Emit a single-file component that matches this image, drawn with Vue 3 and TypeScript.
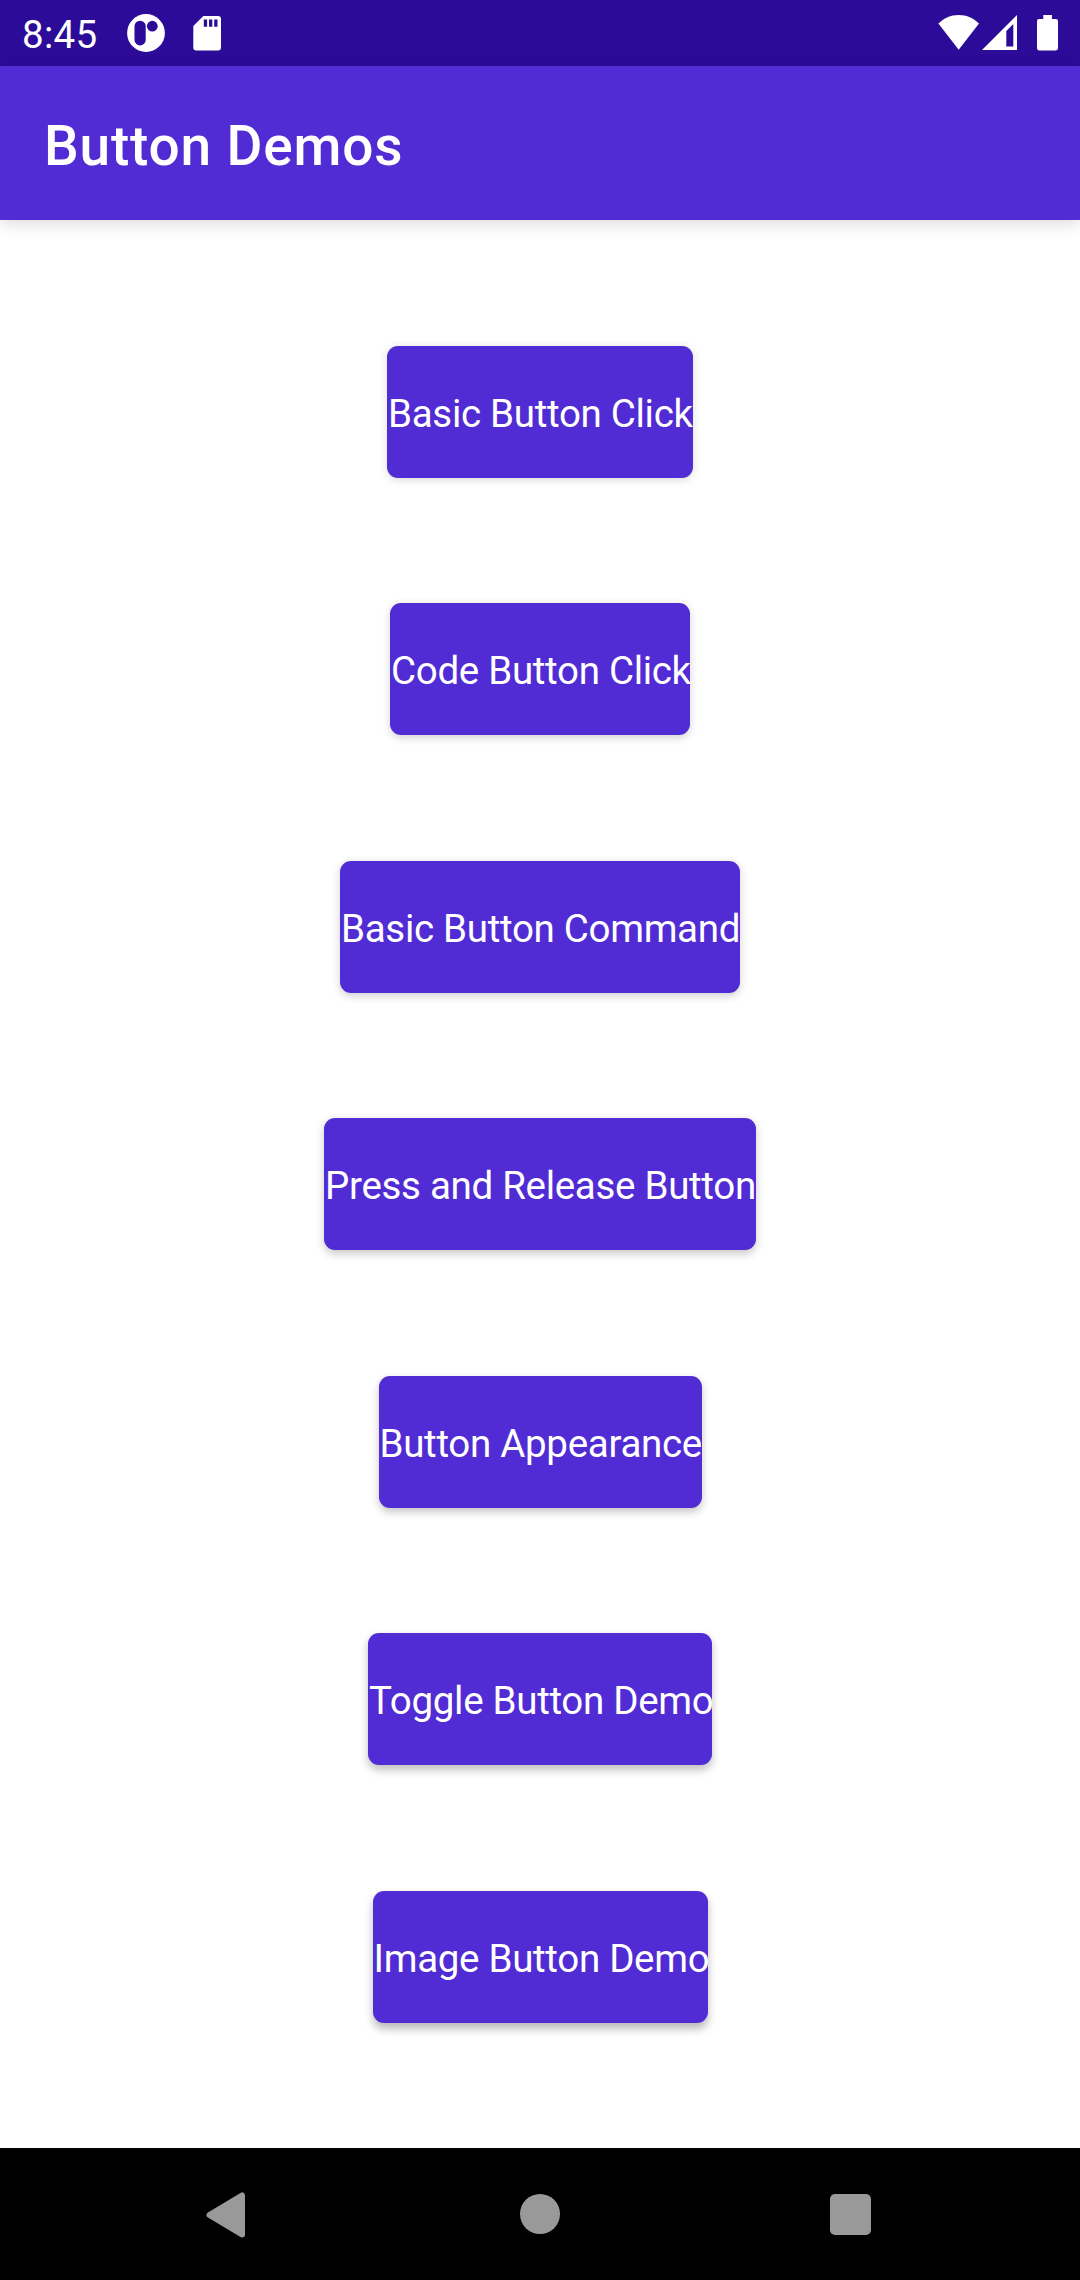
<script setup lang="ts">
interface DemoButton {
  label: string
  width: number
  depth: number
}

// depth drives the drop shadow, which lengthens further down the screen
const buttons: DemoButton[] = [
  { label: 'Basic Button Click', width: 306, depth: 1 },
  { label: 'Code Button Click', width: 300, depth: 2 },
  { label: 'Basic Button Command', width: 400, depth: 3 },
  { label: 'Press and Release Button', width: 432, depth: 4 },
  { label: 'Button Appearance', width: 323, depth: 5 },
  { label: 'Toggle Button Demo', width: 344, depth: 6 },
  { label: 'Image Button Demo', width: 335, depth: 7 },
]

function buttonStyle(b: DemoButton): Record<string, string> {
  const y = 1 + b.depth * 0.6
  const alpha = 0.13 + b.depth * 0.02
  return {
    width: `${b.width}px`,
    boxShadow: `0 ${y}px 8px rgba(0, 0, 0, ${alpha})`,
  }
}
</script>

<template>
  <div class="screen">
    <div class="status">
      <span class="time">8:45</span>
      <svg class="app-icon" width="40" height="40" viewBox="0 0 40 40">
        <circle cx="20" cy="20" r="18.9" fill="#fff" />
        <rect x="8.5" y="7.7" width="11.2" height="24.8" rx="5.6" fill="#2b0b98" />
        <circle cx="26.3" cy="13.2" r="5.4" fill="#2b0b98" />
      </svg>
      <svg class="sd-icon" width="28" height="36" viewBox="0 0 28 36">
        <path d="M10.3 1H25a3 3 0 0 1 3 3v28.4a3 3 0 0 1-3 3H3.300a3 3 0 0 1-3-3V11z" fill="#fff" />
        <path d="M10.800 4.600h3.300v7.200h-3.300zM16 4.600h3.300v7.200H16zM21.200 4.600h3.300v7.200h-3.300z" fill="#2b0b98" />
      </svg>
      <span class="spacer"></span>
      <svg class="wifi-icon" width="42" height="36" viewBox="0 0 42 36">
        <path d="M.4 9.600C5.700 4.200 12.500 1 20.700 1s15 3.200 20.300 8.600L20.700 35.700z" fill="#fff" />
      </svg>
      <svg class="signal-icon" width="35" height="36" viewBox="0 0 35 36">
        <path fill-rule="evenodd" d="M0 36 35 1v35zM24.300 17v15.500h7V10z" fill="#fff" />
      </svg>
      <svg class="battery-icon" width="21" height="37" viewBox="0 0 21 37">
        <path d="M6.300 1h8.600v4h4a2.100 2.100 0 0 1 2.100 2.100v27.200a2.100 2.100 0 0 1-2.100 2.100H2.100A2.100 2.100 0 0 1 0 34.300V7.100A2.100 2.100 0 0 1 2.100 5h4.200z" fill="#fff" />
      </svg>
    </div>
    <header class="toolbar">
      <h1 class="title">Button Demos</h1>
    </header>
    <main class="content">
      <button v-for="b in buttons" :key="b.label" class="demo" :style="buttonStyle(b)">
        {{ b.label }}
      </button>
    </main>
    <nav class="navbar">
      <svg class="back" width="40" height="46" viewBox="0 0 40 46">
        <path d="M36 3.500v39L3.500 23z" fill="#999" stroke="#999" stroke-width="6" stroke-linejoin="round" />
      </svg>
      <span class="home"></span>
      <span class="recents"></span>
    </nav>
  </div>
</template>

<style>
body {
  margin: 0;
}
</style>

<style scoped>
.screen {
  display: flex;
  flex-direction: column;
  width: 1080px;
  height: 2280px;
  overflow: hidden;
  background: #fff;
  color: #fff;
  font-family: Roboto, sans-serif;
}
.status {
  display: flex;
  align-items: flex-start;
  box-sizing: border-box;
  height: 66px;
  padding: 14px 22px 0;
  background: #2b0b98;
}
.time {
  width: 104px;
  font-size: 38.5px;
  line-height: 42px;
  letter-spacing: 0.3px;
}
.app-icon {
  margin-top: -0.7px;
}
.sd-icon {
  margin-left: 27px;
  margin-top: 1px;
}
.spacer {
  flex: 1;
}
.signal-icon {
  margin-left: 2px;
}
.battery-icon {
  margin-left: 20px;
}
.toolbar {
  position: relative;
  display: flex;
  align-items: center;
  box-sizing: border-box;
  height: 154px;
  padding: 6px 44px 0;
  background: #512bd4;
  box-shadow: 0 4px 16px rgba(0, 0, 0, 0.14);
}
.title {
  margin: 0;
  font-size: 55px;
  font-weight: 500;
  line-height: 64px;
  letter-spacing: 0.82px;
}
.content {
  display: flex;
  flex-direction: column;
  align-items: center;
  justify-content: space-evenly;
  height: 1928px;
}
.demo {
  box-sizing: border-box;
  height: 132px;
  padding: 4px 0 0 1px;
  border: 0;
  border-radius: 11px;
  background: #512bd4;
  color: #fff;
  font: 400 38.5px/46px Roboto, sans-serif;
  letter-spacing: -0.3px;
  text-align: left;
  white-space: nowrap;
}
.navbar {
  display: flex;
  align-items: flex-start;
  height: 132px;
  background: #000;
}
.back {
  margin: 43.500px 0 0 205.500px;
}
.home {
  width: 40px;
  height: 40px;
  margin: 46px 0 0 274.500px;
  border-radius: 50%;
  background: #999;
}
.recents {
  width: 41px;
  height: 41px;
  margin: 46px 0 0 270px;
  border-radius: 5px;
  background: #999;
}
</style>
